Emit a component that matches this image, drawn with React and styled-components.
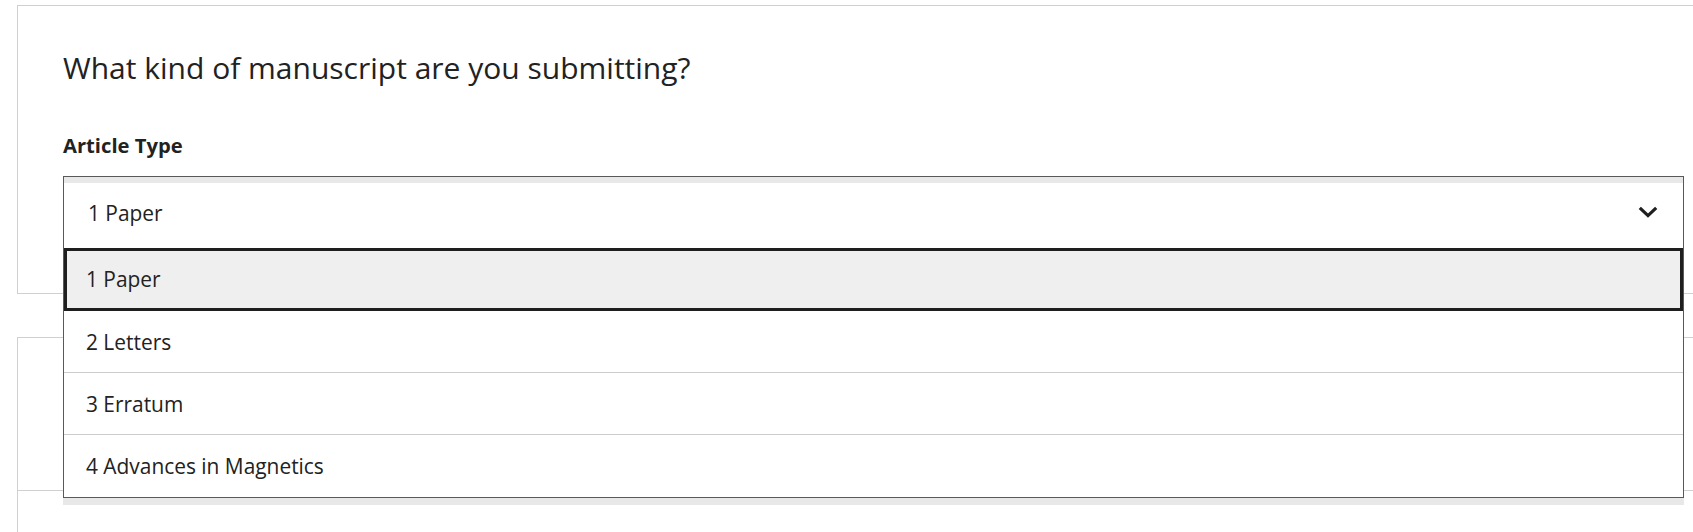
import React from 'react';
import styled, { createGlobalStyle } from 'styled-components';

const GlobalStyle = createGlobalStyle`
  html, body {
    margin: 0;
    padding: 0;
    background: #ffffff;
    overflow: hidden;
  }
  body {
    font-family: "Open Sans", "Noto Sans", "Liberation Sans", sans-serif;
    color: #222222;
  }
  * {
    box-sizing: border-box;
  }
`;

const options = ['1 Paper', '2 Letters', '3 Erratum', '4 Advances in Magnetics'];

const Page = styled.div`
  padding: 5px 0 0 17px;
  height: 532px;
`;

const Card = styled.section`
  width: 1713px;
  border: 1px solid #d0d0d0;
  border-bottom: ${props => (props.open ? 'none' : '1px solid #d0d0d0')};
  background: #ffffff;
  padding: ${props => (props.compact ? '0 45px' : '42px 45px 45px')};
  height: ${props => props.height || 'auto'};
  margin-top: ${props => props.gap || '0'};
`;

const Heading = styled.h2`
  margin: 0;
  font-size: 30px;
  line-height: 40px;
  font-weight: 400;
  color: #222222;
`;

const Label = styled.label`
  display: block;
  margin: 44px 0 17px;
  font-size: 20.2px;
  line-height: 27px;
  font-weight: 700;
  color: #222222;
`;

const Combo = styled.div`
  position: relative;
  width: 1621px;
`;

const SelectBox = styled.div`
  height: 72px;
  display: flex;
  align-items: center;
  justify-content: space-between;
  padding: 0 25px 0 24px;
  border: 1px solid #595959;
  border-bottom: none;
  box-shadow: inset 0 6px 0 #e8e8e8;
  font-size: 20.9px;
  color: #222222;
  cursor: pointer;
`;

const Chevron = styled.svg`
  width: 20px;
  height: 12px;
  display: block;
  margin-top: -1px;
`;

const Listbox = styled.ul`
  position: absolute;
  top: 100%;
  left: 0;
  right: 0;
  margin: 0;
  padding: 0;
  list-style: none;
  background: #ffffff;
  border: 1px solid #595959;
  border-top: none;
  box-shadow: 0 7px 0 #e8e8e8;
  z-index: 10;
`;

const Option = styled.li`
  display: flex;
  align-items: center;
  padding-left: 22px;
  font-size: 20.9px;
  color: #222222;
  border-bottom: 1px solid #cccccc;
  background: ${props => (props.active ? '#efefef' : '#ffffff')};
  outline: ${props => (props.active ? '3px solid #1e1e1e' : 'none')};
  outline-offset: -3px;
  height: ${props => (props.active ? '63px' : '62px')};

  &:last-child {
    border-bottom: none;
  }
`;

const App = () => {
  return (
    <>
      <GlobalStyle />
      <Page>
        <Card>
          <Heading>What kind of manuscript are you submitting?</Heading>
          <Label>Article Type</Label>
          <Combo>
            <SelectBox>
              <span>1 Paper</span>
              <Chevron viewBox="0 0 20 12" fill="none">
                <path
                  d="M1.8 1.8 L10 9.6 L18.2 1.8"
                  stroke="#1f1f1f"
                  strokeWidth="3.2"
                  strokeLinejoin="miter"
                />
              </Chevron>
            </SelectBox>
            <Listbox role="listbox">
              {options.map((o, i) => (
                <Option key={o} active={i === 0} role="option">
                  {o}
                </Option>
              ))}
            </Listbox>
          </Combo>
        </Card>
        <Card compact open height="153px" gap="43px" />
        <Card compact height="60px" />
      </Page>
    </>
  );
};

export default App;
